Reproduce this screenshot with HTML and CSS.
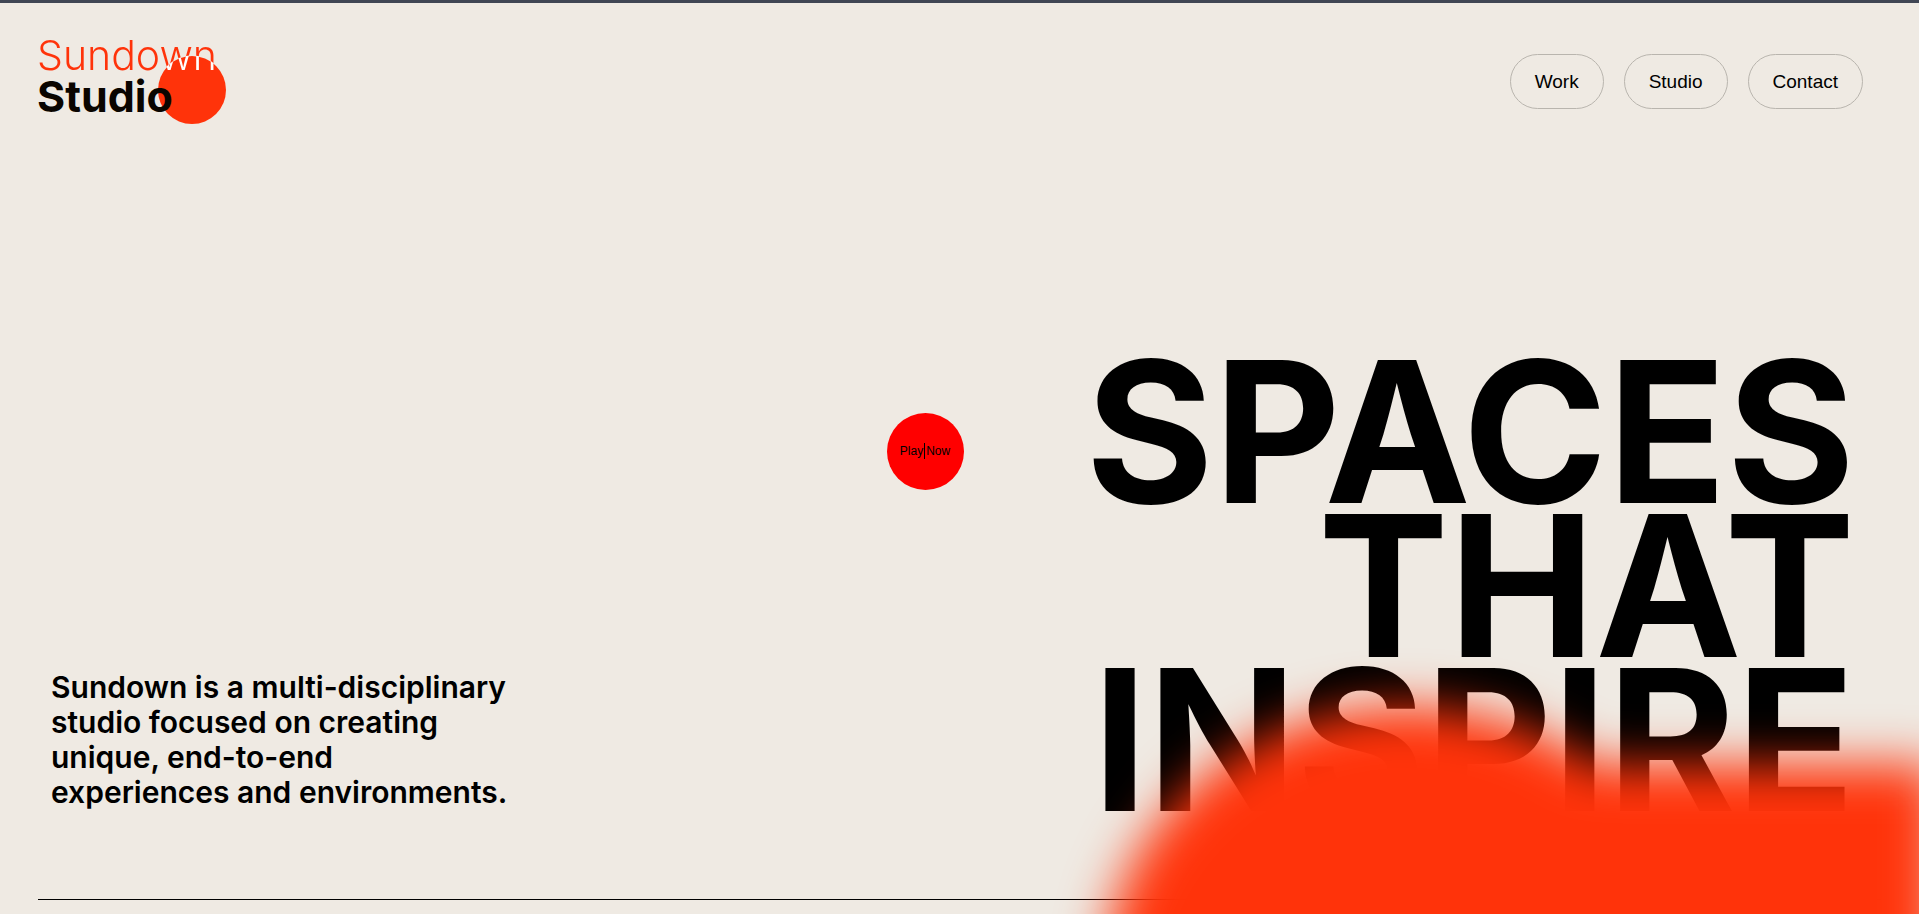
FILE: index.html
```html
<!DOCTYPE html>
<html lang="en">
<head>
<meta charset="utf-8">
<meta name="viewport" content="width=device-width, initial-scale=1">
<title>Sundown Studio</title>
<link rel="stylesheet" href="styles.css">
</head>
<body>
<div class="page">
  <header class="header">
    <a class="logo" href="#">
      <span class="logo-sun"></span>
      <span class="logo-light">Sundown</span>
      <span class="logo-bold">Studio</span>
    </a>
    <nav class="nav">
      <a class="pill" href="#work">Work</a>
      <a class="pill" href="#studio">Studio</a>
      <a class="pill" href="#contact">Contact</a>
    </nav>
  </header>
  <main class="hero">
    <p class="intro">Sundown is a multi-disciplinary studio focused on creating unique, end-to-end experiences and environments.</p>
    <h1 class="title">SPACES<br>THAT<br>INSPIRE</h1>
  </main>
  <hr class="rule">
  <div class="glow" aria-hidden="true">
    <span class="glow-band"></span>
    <span class="glow-ball"></span>
  </div>
  <button class="play" type="button"><span>Play</span><i class="caret"></i><span>Now</span></button>
</div>
</body>
</html>
```
FILE: styles.css
```css
* { box-sizing: border-box; }

body {
  margin: 0;
  background: #efeae3;
  color: #000;
  font-family: Inter, "Liberation Sans", sans-serif;
}

.page {
  position: relative;
  display: flex;
  flex-direction: column;
  min-height: 100vh;
  overflow: hidden;
  border-top: 3px solid #404654;
}

.header {
  display: flex;
  align-items: flex-start;
  justify-content: space-between;
  padding: 32px 56px 0 37px;
}

.logo {
  position: relative;
  display: flex;
  flex-direction: column;
  width: 190px;
  height: 90px;
  line-height: 40px;
  text-decoration: none;
}

.logo-sun {
  position: absolute;
  left: 121px;
  top: 21px;
  width: 68px;
  height: 68px;
  border-radius: 50%;
  background: #ff330a;
}

.logo-light {
  position: relative;
  font-size: 41px;
  font-weight: 300;
  color: transparent;
  background: radial-gradient(circle at 155px 55px, #fff 34px, #ff330a 35px);
  -webkit-background-clip: text;
  background-clip: text;
}

.logo-bold {
  position: relative;
  font-size: 43px;
  font-weight: 700;
  line-height: 42px;
  color: #0a0500;
}

.nav {
  display: flex;
  gap: 20px;
  padding-top: 19px;
}

.pill {
  padding: 0 24px;
  border: 1px solid #b9b5ae;
  border-radius: 28px;
  color: #000;
  font-family: "Liberation Sans", sans-serif;
  font-size: 19px;
  line-height: 53px;
  text-decoration: none;
}

.hero {
  display: flex;
  flex: 1;
  align-items: flex-end;
  justify-content: space-between;
  padding: 0 64px 0 51px;
}

.intro {
  width: 460px;
  margin: 0 0 89px;
  font-size: 30px;
  font-weight: 600;
  line-height: 35px;
}

.title {
  margin: 0 0 82px;
  font-size: 196px;
  font-weight: 650;
  line-height: 154px;
  text-align: right;
}

.rule {
  width: calc(100% - 76px);
  height: 1px;
  margin: 0 38px 14px;
  border: 0;
  background: #000;
}

.glow {
  position: absolute;
  inset: 0;
  filter: blur(25px);
  pointer-events: none;
}

.glow-band {
  position: absolute;
  right: -18px;
  top: 761px;
  bottom: -300px;
  width: 540px;
  background: #ff330a;
}

.glow-ball {
  position: absolute;
  right: 210px;
  top: 704px;
  width: 604px;
  height: 540px;
  border-radius: 50%;
  background: #ff330a;
}

.play {
  position: absolute;
  left: calc(50% - 73px);
  top: 410px;
  display: flex;
  align-items: center;
  justify-content: center;
  gap: 1px;
  width: 77px;
  height: 77px;
  padding: 0 0 2px;
  border: 0;
  border-radius: 50%;
  background: #f00;
  color: #000;
  font-family: "Liberation Sans", sans-serif;
  font-size: 12px;
}

.caret {
  width: 1px;
  height: 16px;
  background: #000;
}
```
